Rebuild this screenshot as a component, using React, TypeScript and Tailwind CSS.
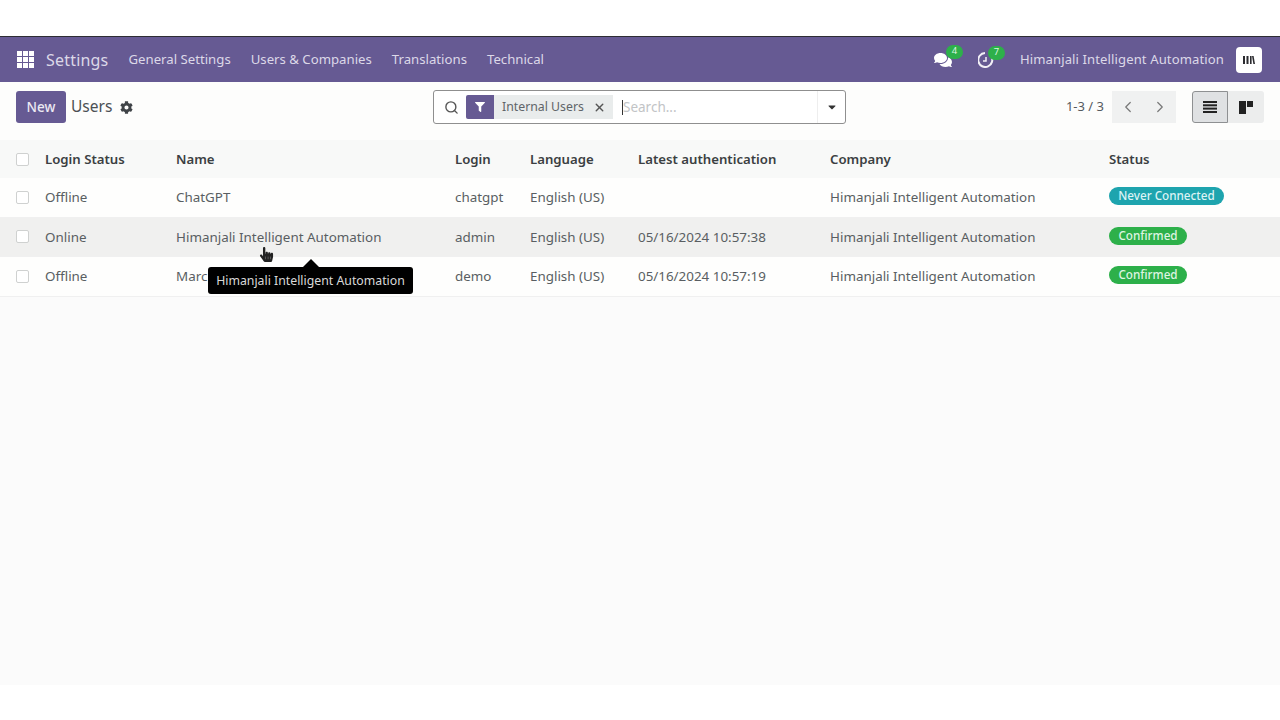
import { FaCog, FaComments, FaFilter, FaCaretDown, FaHandPointer } from "react-icons/fa";
import { LuChevronLeft, LuChevronRight, LuSearch, LuX } from "react-icons/lu";

const cols = "grid grid-cols-[45px_131px_279px_75px_108px_192px_279px_1fr] items-center";

const users = [
  { state: "Offline", name: "ChatGPT", login: "chatgpt", auth: "", status: "Never Connected", hover: false },
  { state: "Online", name: "Himanjali Intelligent Automation", login: "admin", auth: "05/16/2024 10:57:38", status: "Confirmed", hover: true },
  { state: "Offline", name: "Marc Demo", login: "demo", auth: "05/16/2024 10:57:19", status: "Confirmed", hover: false },
];

function Checkbox() {
  return <span className="ml-4 block size-[13px] rounded-[2px] border border-[#cfd1d0] bg-white" />;
}

function AppsIcon() {
  return (
    <svg width="17" height="17" viewBox="0 0 17 17" fill="#fff" className="ml-px">
      {[0, 6, 12].map((y) =>
        [0, 6, 12].map((x) => <rect key={`${x}-${y}`} x={x} y={y} width="5" height="5" />)
      )}
    </svg>
  );
}

function Badge({ n }: { n: number }) {
  return (
    <span className="absolute -right-[11px] -top-[6px] flex h-[14px] w-[17px] items-center justify-center rounded-full bg-[#2db04a] text-[9.5px] text-[#dff5e2]">
      {n}
    </span>
  );
}

function Navbar() {
  return (
    <nav className="flex h-[46px] items-center border-t border-[#2d2d33] bg-[#665a93] pl-4 pr-[18px] text-[#dcd8e8]">
      <AppsIcon />
      <span className="ml-3 text-[16px] tracking-[0.2px]">Settings</span>
      <div className="ml-5 flex gap-5 text-[13.2px]">
        <span>General Settings</span>
        <span>Users &amp; Companies</span>
        <span>Translations</span>
        <span>Technical</span>
      </div>
      <div className="ml-auto flex items-center">
        <span className="relative mr-[26px] text-white">
          <FaComments size={18} />
          <Badge n={4} />
        </span>
        <span className="relative mr-[26px] text-[#f2f0f6]">
          <svg width="16" height="16" viewBox="0 0 16 16" fill="none" stroke="currentColor" strokeWidth="2" className="block">
            <path d="M13 4a7 7 0 1 1-6-3" />
            <path d="M8 5v4H5" strokeWidth="1.5" />
          </svg>
          <Badge n={7} />
        </span>
        <span className="text-[13.1px] tracking-[0.1px]">Himanjali Intelligent Automation</span>
        <span className="ml-3 flex size-[26px] items-center justify-center rounded-[4px] bg-white">
          <svg width="12" height="8" viewBox="0 0 12 8" fill="#2b2b30">
            <rect x="0" y="0" width="2" height="8" />
            <rect x="3.5" y="0" width="2" height="8" />
            <rect x="7" y="0" width="1.6" height="8" />
            <path d="M9 0h1.6l1.4 8h-1.6z" />
          </svg>
        </span>
      </div>
    </nav>
  );
}

function SearchBar() {
  return (
    <div className="flex h-[34px] w-[413px] items-center rounded-[3px] border border-[#8f8f8f] bg-white pl-[10px]">
      <LuSearch size={15} className="text-[#555]" strokeWidth={2.2} />
      <span className="ml-[7px] flex h-6 w-7 items-center justify-center rounded-l-[2px] bg-[#665a93] text-white">
        <FaFilter size={10} />
      </span>
      <span className="flex h-6 w-[119px] items-center bg-[#e9ecec] pl-2 text-[12.3px] text-[#5f6468]">
        Internal Users
        <LuX size={13} strokeWidth={2.6} className="ml-[9px] text-[#555]" />
      </span>
      <span className="ml-[9px] h-[15px] w-px bg-[#333]" />
      <span className="text-[13.5px] text-[#c2c4c6]">Search...</span>
      <span className="ml-auto flex h-full w-[28px] items-center justify-center border-l border-[#eeeeee]">
        <FaCaretDown size={12} className="text-[#333]" />
      </span>
    </div>
  );
}

function ControlPanel() {
  return (
    <div className="grid h-[58px] grid-cols-[417px_413px_1fr] items-center bg-[#fdfdfc] pb-2 pl-4">
      <div className="flex items-center">
        <span className="flex h-8 w-[50px] items-center justify-center rounded-[3px] bg-[#665a93] text-[13.5px] font-medium text-[#ece9f2]">New</span>
        <span className="ml-[5px] text-[15.5px] text-[#4b5054]">Users</span>
        <FaCog size={13} className="ml-2 text-[#3f4347]" />
      </div>
      <SearchBar />
      <div className="flex items-center justify-end pr-4">
        <span className="mr-2 text-[13px] text-[#555a5e]">1-3 / 3</span>
        <span className="flex h-8 w-[64px] items-center justify-around bg-[#f0f1f1] text-[#777]">
          <LuChevronLeft size={18} strokeWidth={1.6} />
          <LuChevronRight size={18} strokeWidth={1.6} />
        </span>
        <span className="ml-4 flex h-8 w-[36px] items-center justify-center rounded-l-[3px] border border-[#8e9092] bg-[#dfe1e3]">
          <svg width="14" height="12" viewBox="0 0 14 12" fill="#222">
            <rect y="0" width="14" height="2" />
            <rect y="3.3" width="14" height="2" />
            <rect y="6.6" width="14" height="2" />
            <rect y="10" width="14" height="2" />
          </svg>
        </span>
        <span className="flex h-8 w-[36px] items-center justify-center rounded-r-[3px] bg-[#eceded]">
          <svg width="14" height="13" viewBox="0 0 14 13" fill="#222">
            <rect x="0" y="0" width="7" height="13" />
            <rect x="8" y="0" width="6" height="6" />
          </svg>
        </span>
      </div>
    </div>
  );
}

function Row({ u }: { u: (typeof users)[number] }) {
  const never = u.status === "Never Connected";
  return (
    <div className={`${cols} h-[39.5px] border-b border-[#f0f0f0] text-[13.4px] text-[#595e62] ${u.hover ? "bg-[#f0f0ef]" : "bg-[#fefefd]"}`}>
      <Checkbox />
      <span>{u.state}</span>
      <span>{u.name}</span>
      <span>{u.login}</span>
      <span>English (US)</span>
      <span>{u.auth}</span>
      <span>Himanjali Intelligent Automation</span>
      <span className="mb-[2px] flex">
        <span className={`flex h-[18px] items-center justify-center rounded-full text-[11.7px] font-medium ${never ? "w-[115px] bg-[#1ea4ae] text-[#dcf3f5]" : "w-[78px] bg-[#2db04a] text-[#dff5e2]"}`}>
          {u.status}
        </span>
      </span>
    </div>
  );
}

function UsersTable() {
  return (
    <div className="relative">
      <div className={`${cols} h-[38px] bg-[#f8f9f8] pt-px text-[13.2px] font-semibold text-[#3b3f42]`}>
        <Checkbox />
        <span>Login Status</span>
        <span>Name</span>
        <span>Login</span>
        <span>Language</span>
        <span>Latest authentication</span>
        <span>Company</span>
        <span>Status</span>
      </div>
      {users.map((u) => (
        <Row key={u.login} u={u} />
      ))}
      <FaHandPointer size={15} className="absolute left-[259px] top-[107px] text-[#222]" />
      <div className="absolute left-[208px] top-[127px] flex h-[27px] w-[205px] items-center justify-center rounded-[3px] bg-black pt-px text-[12.3px] text-[#d9d9d9]">
        Himanjali Intelligent Automation
        <span className="absolute -top-[8px] left-[95px] size-0 border-x-[8px] border-b-[8px] border-x-transparent border-b-black" />
      </div>
    </div>
  );
}

export default function App() {
  return (
    <div className="flex h-[720px] w-[1280px] flex-col overflow-hidden bg-white font-['Noto_Sans',sans-serif]">
      <div className="h-9 bg-white" />
      <Navbar />
      <ControlPanel />
      <UsersTable />
      <div className="h-[388.5px] bg-[#fbfbfb]" />
    </div>
  );
}
